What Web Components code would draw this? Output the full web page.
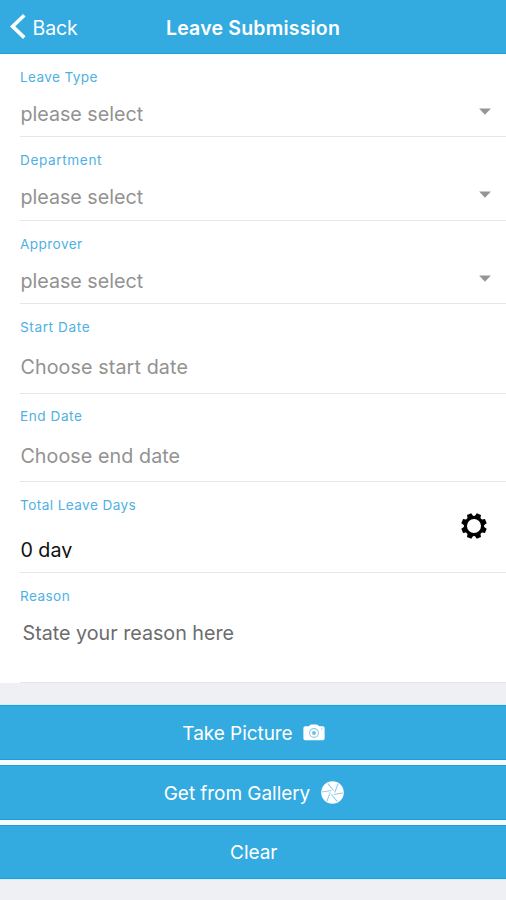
<!DOCTYPE html>
<html lang="en">
<head>
<meta charset="utf-8">
<title>Leave Submission</title>
<style>
html,body{margin:0;height:100%;overflow:hidden}
body{background:#eff0f4;font-family:Inter,"Liberation Sans",sans-serif}
</style>
</head>
<body>
<leave-screen></leave-screen>
<script>
const define = (name, html) => {
  const t = document.createElement('template');
  t.innerHTML = html;
  customElements.define(name, class extends HTMLElement {
    constructor() {
      super();
      this.attachShadow({mode: 'open'}).append(t.content.cloneNode(true));
    }
  });
};

define('nav-bar', `
<style>
:host{display:grid;grid-template-columns:1fr auto 1fr;align-items:center;height:54px;box-sizing:border-box;background:#33abe1;border-bottom:1px solid #27a0d8;color:#fff;font-size:19.5px;line-height:24px}
.back{display:flex;align-items:center;gap:6.5px;padding-left:10px}
svg{display:block}
.title{font-weight:600;letter-spacing:.2px;padding-top:2px}
.b{letter-spacing:-.1px;padding-top:2px}
</style>
<div class="back"><svg width="16" height="28" viewBox="0 0 16 28"><path d="M14.3 2.3 2.6 13.4 14.3 24.6" fill="none" stroke="#fff" stroke-width="3.6"/></svg><span class="b">Back</span></div>
<span class="title"><slot></slot></span>`);

define('drop-arrow', `
<style>:host{display:block}svg{display:block}</style>
<svg width="14" height="8" viewBox="0 0 14 8"><path d="M1.1.4H12.9L7 6.8z" fill="#959595"/></svg>`);

define('gear-icon', `
<style>:host{display:block}svg{display:block}</style>
<svg width="26" height="26" viewBox="-13 -13 26 26">
<circle r="8.6" fill="none" stroke="#000" stroke-width="3.2"/>
<g fill="#000" transform="rotate(22.5)">
<path id="t" d="M-3.2-8.6-2.3-12.8H2.3L3.2-8.6z"/>
<use href="#t" transform="rotate(45)"/><use href="#t" transform="rotate(90)"/><use href="#t" transform="rotate(135)"/><use href="#t" transform="rotate(180)"/><use href="#t" transform="rotate(225)"/><use href="#t" transform="rotate(270)"/><use href="#t" transform="rotate(315)"/>
</g></svg>`);

define('camera-icon', `
<style>:host{display:block}svg{display:block}</style>
<svg width="22" height="17" viewBox="0 0 22 17"><path d="M2.2 2.2H5.6L8 .4H14L16.4 2.2H19.8Q21.6 2.2 21.6 4V14.5Q21.6 16.3 19.8 16.3H2.2Q.4 16.3.4 14.5V4Q.4 2.2 2.2 2.2z" fill="#fff"/><circle cx="11" cy="9" r="4.4" fill="none" stroke="#8ecdec" stroke-width="1.1"/><circle cx="11" cy="9" r="1.9" fill="#6bbde6"/><circle cx="18.7" cy="5" r=".7" fill="#8ecdec"/></svg>`);

define('aperture-icon', `
<style>:host{display:block}svg{display:block}</style>
<svg width="23" height="23" viewBox="-12 -12 24 24"><circle r="11.8" fill="#fff"/>
<g stroke="#8fcdec" stroke-width="1.1" fill="none"><path id="b" d="M1.2-2.1-5-9.6"/><use href="#b" transform="rotate(60)"/><use href="#b" transform="rotate(120)"/><use href="#b" transform="rotate(180)"/><use href="#b" transform="rotate(240)"/><use href="#b" transform="rotate(300)"/></g></svg>`);

define('leave-field', `
<style>
:host{display:flex;box-sizing:border-box;height:var(--h);margin-left:20px;padding-top:var(--top,15px);border-bottom:1px solid #e6e6e8;justify-content:space-between}
.label{color:#4fb1e3;font-size:13.6px;line-height:17px;letter-spacing:var(--lls,.42px)}
.value{color:var(--value,#929292);font-size:19.7px;line-height:30px;margin-top:var(--gap);padding-left:var(--indent,.4px);height:var(--clip,30px);overflow:hidden;letter-spacing:var(--ls,0)}
.end{padding-right:var(--end,14px);padding-top:var(--drop,39px)}
</style>
<div><div class="label"><slot name="label"></slot></div><div class="value"><slot></slot></div></div>
<div class="end"><slot name="accessory"></slot></div>`);

define('action-button', `
<style>
:host{display:flex;box-sizing:border-box;align-items:center;justify-content:center;gap:10.5px;padding-left:1.5px;background:#33abe1;border:solid #229dd7;border-width:1px 0;color:#fff;font-size:19px;line-height:24px}
span{letter-spacing:-.05px;padding-top:2px}
</style>
<span><slot></slot></span><slot name="icon"></slot>`);

define('leave-screen', `
<style>
:host{display:block;height:900px;background:#eff0f4}
.form{background:#fff}
.actions{display:grid;grid-template-rows:55px 55px 54px;gap:5px;margin-top:21px;background:#f5fbfe;border:solid #d5effb;border-width:1px 0}
.total{--end:19px;--drop:16px}
</style>
<nav-bar>Leave Submission</nav-bar>
<div class="form">
<leave-field style="--h:83px;--gap:13px;--lls:.36px"><span slot="label">Leave Type</span>please select<drop-arrow slot="accessory"></drop-arrow></leave-field>
<leave-field style="--h:84px;--gap:13px;--lls:.62px"><span slot="label">Department</span>please select<drop-arrow slot="accessory"></drop-arrow></leave-field>
<leave-field style="--h:83px;--gap:13px"><span slot="label">Approver</span>please select<drop-arrow slot="accessory"></drop-arrow></leave-field>
<leave-field style="--h:90px;--gap:16px;--ls:.12px;--lls:.6px"><span slot="label">Start Date</span>Choose start date</leave-field>
<leave-field style="--h:88px;--gap:16px;--top:14px;--lls:.55px;--ls:.08px"><span slot="label">End Date</span>Choose end date</leave-field>
<leave-field class="total" style="--h:91px;--gap:21px;--value:#111;--clip:23px"><span slot="label">Total Leave Days</span>0 day<gear-icon slot="accessory"></gear-icon></leave-field>
<leave-field style="--h:110px;--gap:13px;--value:#6c6c6c;--indent:2.6px"><span slot="label">Reason</span>State your reason here</leave-field>
</div>
<div class="actions">
<action-button>Take Picture<camera-icon slot="icon"></camera-icon></action-button>
<action-button>Get from Gallery<aperture-icon slot="icon"></aperture-icon></action-button>
<action-button>Clear</action-button>
</div>`);
</script>
</body>
</html>
